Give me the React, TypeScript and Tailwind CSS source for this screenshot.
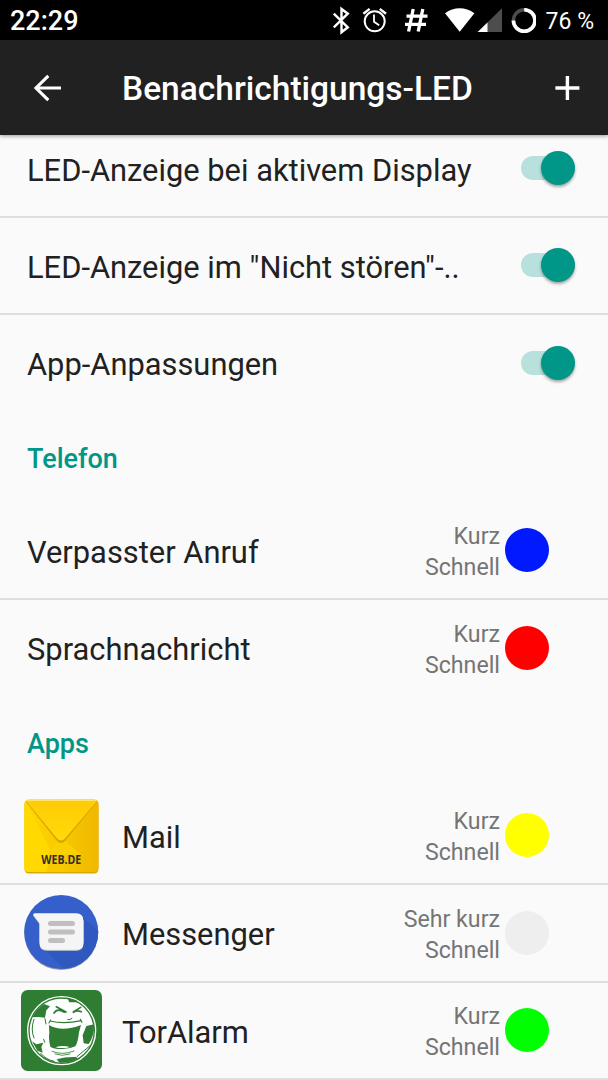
import type { ReactNode } from 'react';

const SWITCHES = [
  'LED-Anzeige bei aktivem Display',
  'LED-Anzeige im "Nicht stören"-..',
  'App-Anpassungen',
];

const PHONE = [
  { label: 'Verpasster Anruf', on: 'Kurz', speed: 'Schnell', color: 'bg-[#0019ff]' },
  { label: 'Sprachnachricht', on: 'Kurz', speed: 'Schnell', color: 'bg-[#ff0000]' },
];

const APPS = [
  { label: 'Mail', on: 'Kurz', speed: 'Schnell', color: 'bg-[#ffff00]', icon: <MailIcon /> },
  { label: 'Messenger', on: 'Sehr kurz', speed: 'Schnell', color: 'bg-[#eeeeee]', icon: <MessengerIcon /> },
  { label: 'TorAlarm', on: 'Kurz', speed: 'Schnell', color: 'bg-[#00ff00]', icon: <TorAlarmIcon /> },
];

export default function App() {
  return (
    <div className="flex h-[1080px] w-[608px] flex-col overflow-hidden bg-[#fafafa] font-['Roboto',sans-serif] text-[#212121]">
      <StatusBar />
      <header className="z-10 flex h-[95px] shrink-0 items-center bg-[#212121] pr-[25px] pl-[33px] text-white shadow-[0_1px_4px_rgba(0,0,0,0.4)]">
        <svg className="h-7 w-7 shrink-0" viewBox="0 0 28 28" fill="none" stroke="currentColor" strokeWidth="3.1">
          <path d="M28 14H3M15.3 1.8 3 14l12.3 12.2" />
        </svg>
        <h1 className="ml-[61px] flex-1 pt-[3px] text-[33.5px] leading-[40px] font-medium whitespace-nowrap">
          Benachrichtigungs-LED
        </h1>
        <svg className="h-8 w-8 shrink-0" viewBox="0 0 32 32" fill="none" stroke="currentColor" strokeWidth="3.4">
          <path d="M16.4 4v24M4.4 16h24" />
        </svg>
      </header>

      <main className="-mt-[14.6px]">
        {SWITCHES.map((label, i) => (
          <Row key={label} divider={i < SWITCHES.length - 1}>
            <Label>{label}</Label>
            <Toggle />
          </Row>
        ))}
        <SectionTitle>Telefon</SectionTitle>
        {PHONE.map((item, i) => (
          <Row key={item.label} divider={i < PHONE.length - 1}>
            <Label>{item.label}</Label>
            <LedInfo on={item.on} speed={item.speed} color={item.color} />
          </Row>
        ))}
        <SectionTitle>Apps</SectionTitle>
        {APPS.map((item) => (
          <Row key={item.label} divider>
            <div className="-ml-[6px] flex w-[101px] shrink-0">{item.icon}</div>
            <Label>{item.label}</Label>
            <LedInfo on={item.on} speed={item.speed} color={item.color} />
          </Row>
        ))}
      </main>
    </div>
  );
}

function StatusBar() {
  return (
    <div className="flex h-10 shrink-0 items-center justify-between bg-black pr-[14px] pl-[10px] text-white">
      <span className="pt-[2px] text-[27px] leading-10 font-medium">22:29</span>
      <div className="flex h-10 items-center">
        <svg className="h-10 w-[204px]" viewBox="332 0 204 40" fill="none" stroke="white">
          <path d="m333.8 13.7 14 13.6-6.3 5V9l6.3 4.7-14 13.6" strokeWidth="2.4" />
          <g strokeWidth="2">
            <circle cx="374.7" cy="21.3" r="10" />
            <path d="M374 14.5v7.2l5.2 3.6" strokeWidth="1.8" />
            <path d="m363.4 13.7 6.2-4.8M386 13.7l-6.2-4.8" strokeWidth="2.4" />
          </g>
          <path d="m413.2 9-4.6 22.5M422.8 9l-4.6 22.5M406.5 16.2h21M405 24.4h21" strokeWidth="3.3" />
          <path d="M445 13.2c9-6.6 20.4-6.6 29.4 0L459.7 31.7z" fill="white" stroke="none" />
          <path d="M502 8.3V32h-24.3z" fill="#4d4d4d" stroke="none" />
          <path d="M487.5 22.4V32h-9.8z" fill="white" stroke="none" />
          <circle cx="524.2" cy="20.5" r="10.8" stroke="#4d4d4d" strokeWidth="3.4" />
          <path d="M524.2 9.7a10.8 10.8 0 1 1-10.8 10.8" strokeWidth="3.6" />
        </svg>
        <span className="ml-[10px] pt-[3px] text-[23px] leading-10 whitespace-nowrap">76 %</span>
      </div>
    </div>
  );
}

function Row({ children, divider }: { children: ReactNode; divider: boolean }) {
  return (
    <div
      className={`flex h-[97.4px] items-center border-b-2 pl-[27px] ${divider ? 'border-[#dedede]' : 'border-transparent'}`}
    >
      {children}
    </div>
  );
}

function Label({ children }: { children: ReactNode }) {
  return (
    <div className="flex-1 pt-[5px] text-[30.85px] leading-9 whitespace-nowrap">{children}</div>
  );
}

function SectionTitle({ children }: { children: ReactNode }) {
  return (
    <h2 className="flex h-[90.2px] items-center pt-[3px] pl-[27px] text-[27px] leading-8 font-medium text-[#009688]">
      {children}
    </h2>
  );
}

function Toggle() {
  return (
    <div className="mr-[33px] flex h-6 w-[54px] items-center justify-end rounded-full bg-[#b8e0dc]">
      <div className="h-[34px] w-[34px] shrink-0 rounded-full bg-[#009688] shadow-[0_2px_3px_rgba(0,0,0,0.35)]" />
    </div>
  );
}

function LedInfo({ on, speed, color }: { on: string; speed: string; color: string }) {
  return (
    <div className="mr-[59px] flex items-center gap-[5px]">
      <div className="pt-[4px] text-right text-[23.2px] leading-[31.3px] text-[#757575]">
        <div>{on}</div>
        <div>{speed}</div>
      </div>
      <div className={`h-11 w-11 rounded-full ${color}`} />
    </div>
  );
}

function MailIcon() {
  return (
    <svg className="mt-[2px] ml-[3px] h-[75px] w-[76px]" viewBox="0 0 76 75">
      <defs>
        <linearGradient id="mailFlap" x1="0" y1="0" x2="0" y2="1">
          <stop offset="0" stopColor="#ffcb05" />
          <stop offset="1" stopColor="#ffda0a" />
        </linearGradient>
        <linearGradient id="mailBody" x1="0" y1="0" x2="1" y2="0">
          <stop offset="0" stopColor="#ffd800" />
          <stop offset="1" stopColor="#f0b800" />
        </linearGradient>
      </defs>
      <rect x="0.5" y="1" width="74" height="73.5" rx="4.5" fill="#d9a900" />
      <rect x="0.5" y="0.5" width="74" height="72.5" rx="4.5" fill="url(#mailBody)" />
      <path d="M2 2 28 54 22 73H5q-4.5 0-4.5-4.5V5z" fill="#ffd900" />
      <path d="m2 2 36 71H22L28 54z" fill="#fac800" />
      <path d="M37 38 57 56H23z" fill="#fad000" />
      <path d="M2 3 33 42q4 4 8 0L73 3z" fill="#d8a400" />
      <path d="M2 2 33 39.5q4 4 8 0L73 2Q71 .8 69 .8H6Q4 .8 2 2z" fill="url(#mailFlap)" />
      <path d="M3 1.3h69" stroke="#ffe980" strokeWidth="1" />
      <text
        x="37.3"
        y="64.5"
        textAnchor="middle"
        textLength="40"
        lengthAdjust="spacingAndGlyphs"
        className="fill-[#30302a] font-['Open_Sans',sans-serif] text-[12px] font-bold"
      >
        WEB.DE
      </text>
    </svg>
  );
}

function MessengerIcon() {
  return (
    <svg className="ml-[3px] h-[77px] w-[76px]" viewBox="0 0 76 77">
      <defs>
        <clipPath id="messengerDisc">
          <circle cx="37.2" cy="38" r="37" />
        </clipPath>
      </defs>
      <circle cx="37.2" cy="39" r="37" fill="#9a9a9a" />
      <circle cx="37.2" cy="38" r="37" fill="#3560cc" />
      <path d="M18 53 42 77H76V38L58 23z" fill="#2f59bf" clipPath="url(#messengerDisc)" />
      <path d="M10.5 20.3H52q7.5 0 7.5 7.5v21.5q0 7.5-7.5 7.5H23q-7.5 0-7.5-7.5V30L9.4 22q-.8-1.2 1.1-1.7z" fill="#d0d0d0" />
      <path d="M10.5 19.3H52q7.5 0 7.5 7.5v21.5q0 7.5-7.5 7.5H23q-7.5 0-7.5-7.5V29L9.4 21q-.8-1.2 1.1-1.7z" fill="#f5f5f5" />
      <path d="M26.5 29.5h22M26.5 38h22M26.5 46.5h12" stroke="#bfbfbf" strokeWidth="5" strokeLinecap="round" />
    </svg>
  );
}

function TorAlarmIcon() {
  return (
    <svg className="h-[81px] w-[81px]" viewBox="33 30 243 243">
      <rect x="33" y="30" width="243" height="243" rx="20" fill="#2e7d32" />
      <circle cx="155" cy="152" r="102" fill="none" stroke="white" strokeWidth="4" />
      <circle cx="155" cy="152" r="96" fill="white" />
      <g fill="#2e7d32">
        {/* ball patches */}
        <path d="M67 112Q78 88 102 72L120 79 109 91 105 113 86 111z" />
        <path d="M172 54 199 61 204 67 178 67z" />
        <path d="M229 138 252 133Q254 167 236 192L221 190 218 166z" />
        <path d="M66 184 79 193 100 188 94 201 98 218 82 212z" />
        <path d="M140 238Q165 230 198 231L204 236Q176 250 148 248z" />
        {/* laughing mouth */}
        <path d="M117 135Q155 158 213 135L207 157Q204 187 196 199Q178 208 154 207Q130 207 121 200Q115 176 118 158z" />
      </g>
      <path d="M136 202Q156 194 180 201L168 204H146z" fill="white" />
      <g fill="none" stroke="#2e7d32" strokeLinecap="round">
        <path d="M121 123Q160 133 214 122M117 129 122 120M211 118 216 127" strokeWidth="3.5" />
        <path d="m139 80 29 16M132 99q8-13 21-7 8 5 13 4" strokeWidth="5" />
        <path d="m212 82-22 14M190 97q10-8 24-2" strokeWidth="5" />
        <path d="M174 119q6 2 12-4" strokeWidth="3" />
        <path d="M126 214Q156 227 192 213M135 222Q156 230 180 222" strokeWidth="2.5" />
        <path d="M72 118Q61 148 72 174M92 220Q108 239 133 244M239 198 201 230" strokeWidth="3" />
        <path d="M105 116 108 132M101 178 104 187" strokeWidth="3" />
      </g>
    </svg>
  );
}
